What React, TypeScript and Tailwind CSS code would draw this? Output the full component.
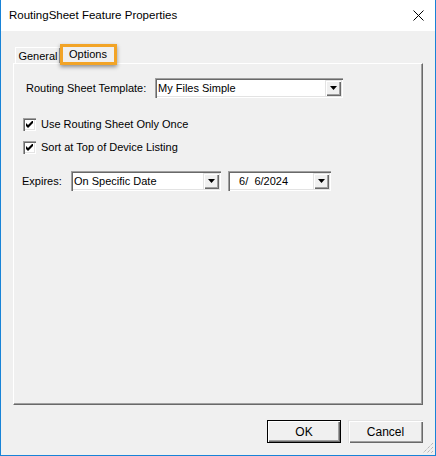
import React from "react";

const sunken =
  "shadow-[inset_1px_1px_0_#a0a0a0,inset_2px_2px_0_#696969,inset_-1px_-1px_0_#ffffff,inset_-2px_-2px_0_#e3e3e3]";
const raised =
  "shadow-[inset_1px_1px_0_#e3e3e3,inset_2px_2px_0_#ffffff,inset_-1px_-1px_0_#696969,inset_-2px_-2px_0_#a0a0a0]";

function Arrow() {
  return (
    <svg width="7" height="4" viewBox="0 0 7 4">
      <path d="M0 0H7L3.5 4Z" fill="#000" />
    </svg>
  );
}

function Combo({ text, w, textPl }: { text: string; w: string; textPl?: string }) {
  return (
    <div className={`${w} h-[20px] bg-white ${sunken} flex items-center p-[2px]`}>
      <div className={`flex-1 ${textPl ?? "pl-[1px]"} text-[11px] leading-none text-black whitespace-pre`}>{text}</div>
      <div className={`w-[16px] h-[16px] bg-[#f0f0f0] ${raised} flex items-center justify-center`}>
        <Arrow />
      </div>
    </div>
  );
}

function Check({ label }: { label: string }) {
  return (
    <div className="flex items-center h-[13px]">
      <div className={`w-[13px] h-[13px] bg-white ${sunken} flex items-center justify-center`}>
        <svg width="7" height="7" viewBox="0 0 7 7">
          <path d="M0 2L2 4L6 0H7V2L2 7L0 5Z" fill="#000" />
        </svg>
      </div>
      <span className="ml-[5px] text-[11px] leading-none text-black">{label}</span>
    </div>
  );
}

export default function App() {
  return (
    <div
      className="relative w-[436px] h-[456px] bg-[#f0f0f0] border-x border-b border-[#1883d7] flex flex-col"
      style={{ fontFamily: '"Liberation Sans", Arial, sans-serif' }}
    >
      {/* Title bar */}
      <div className="h-[31px] bg-white flex items-center justify-between pl-[8px] pr-[11px]">
        <span className="text-[11.5px] text-black">RoutingSheet Feature Properties</span>
        <svg width="11" height="11" viewBox="0 0 11 11">
          <path d="M0.5 0.5L10.5 10.5M10.5 0.5L0.5 10.5" stroke="#000" strokeWidth="1" />
        </svg>
      </div>

      <div className="flex-1 flex flex-col px-[12px]">
        {/* Tabs */}
        <div className="mt-[12px] h-[20px] flex items-end pl-[2px]">
          <div className="h-[17px] w-[45px] mb-[-1px] bg-[#f0f0f0] border-t border-l border-white shadow-[inset_-1px_0_0_#a0a0a0] flex items-center justify-center text-[11px] text-black leading-none">
            General
          </div>
          <div className="relative h-[20px] w-[55px] mb-[-1px] bg-[#f0f0f0] border-t border-l border-white shadow-[inset_-1px_0_0_#a0a0a0] flex items-center justify-center text-[11px] text-black leading-none z-10">
            Options
            <div className="absolute left-[-1px] top-[-1px] w-[57px] h-[21px] border-[3px] border-[#f2a427] shadow-[0_2px_4px_rgba(0,0,0,0.4)]" />
          </div>
        </div>

        {/* Panel */}
        <div className="w-[410px] h-[342px] border-t border-l border-white border-r border-b border-r-[#696969] border-b-[#696969] shadow-[inset_-1px_-1px_0_#a0a0a0] flex flex-col pl-[8px]">
          <div className="mt-[14px] flex items-center h-[20px]">
            <span className="ml-[4px] w-[129px] text-[11px] leading-none text-black">Routing Sheet Template:</span>
            <Combo text="My Files Simple" w="w-[188px]" />
          </div>
          <div className="mt-[20px] ml-[1px]">
            <Check label="Use Routing Sheet Only Once" />
          </div>
          <div className="mt-[10px] ml-[1px]">
            <Check label="Sort at Top of Device Listing" />
          </div>
          <div className="mt-[17px] flex items-center h-[20px]">
            <span className="w-[49px] text-[11px] leading-none text-black">Expires:</span>
            <Combo text="On Specific Date" w="w-[150px]" />
            <div className="ml-[7px]">
              <Combo text="  6/  6/2024" w="w-[103px]" textPl="pl-[3px]" />
            </div>
          </div>
        </div>

        {/* Buttons */}
        <div className="mt-[15px] flex justify-end gap-[7px]">
          <div className="w-[74px] h-[23px] border border-black bg-[#f0f0f0] shadow-[inset_1px_1px_0_#ffffff,inset_-1px_-1px_0_#696969,inset_-2px_-2px_0_#a0a0a0] flex items-center justify-center text-[12px] text-black leading-none">
            OK
          </div>
          <div className={`w-[75px] h-[23px] bg-[#f0f0f0] ${raised} flex items-center justify-center text-[12px] text-black leading-none`}>
            Cancel
          </div>
        </div>
      </div>

      {/* Resize grip */}
      <svg className="absolute right-[1px] bottom-[1px]" width="12" height="12" viewBox="0 0 12 12">
        <path d="M11 1L1 11M11 5L5 11M11 9L9 11" stroke="#a0a0a0" strokeWidth="1" strokeDasharray="1 1" />
      </svg>
    </div>
  );
}
